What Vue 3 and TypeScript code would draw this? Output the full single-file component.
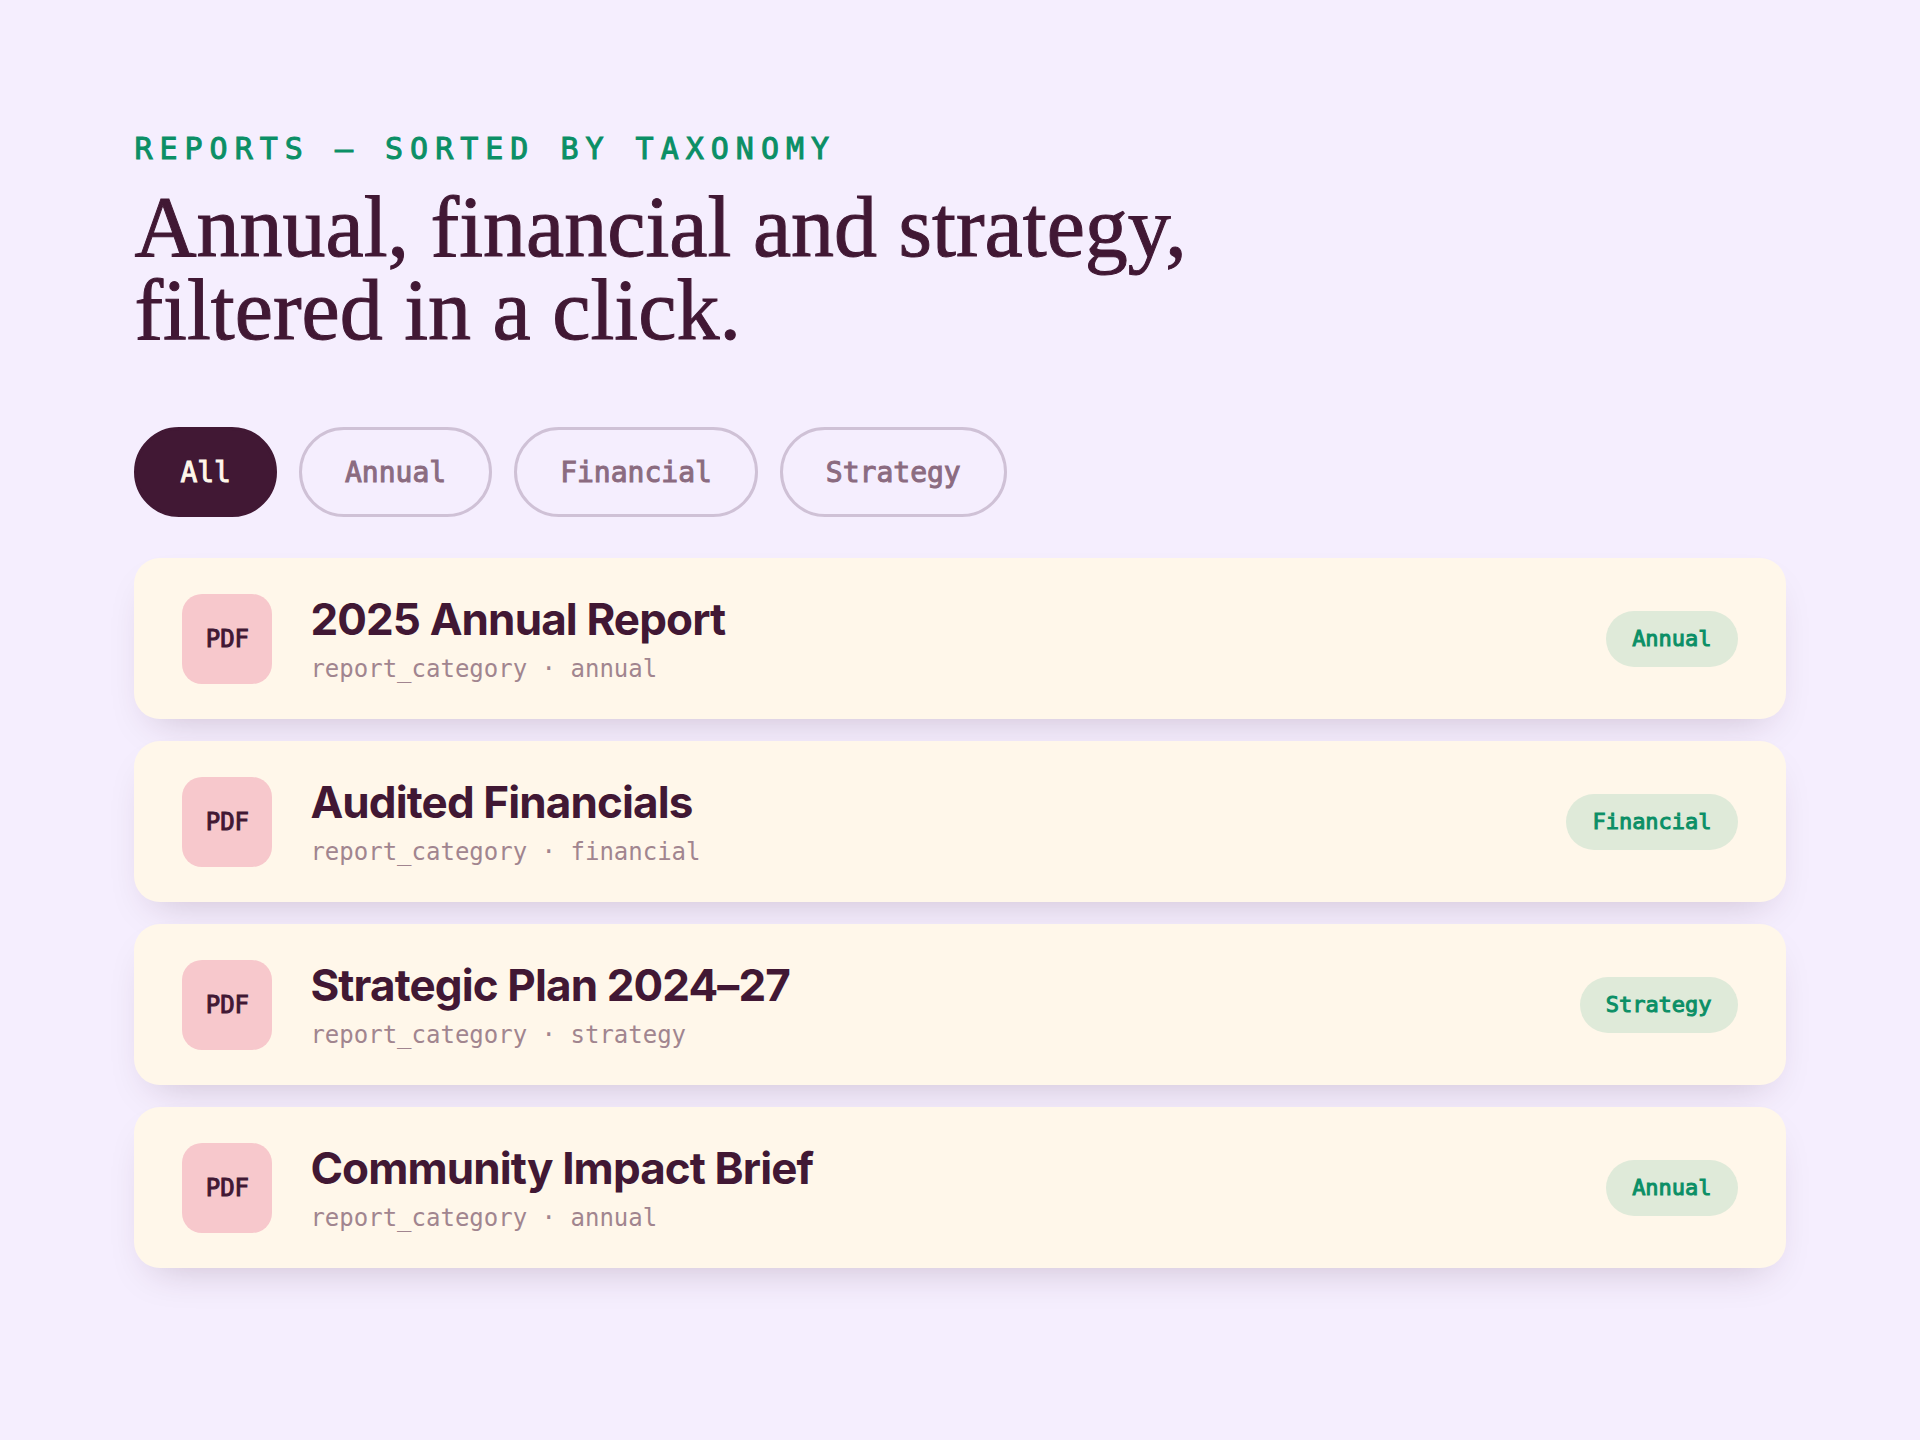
<script setup lang="ts">
import { computed, ref } from 'vue'

type Category = 'Annual' | 'Financial' | 'Strategy'
type Filter = 'All' | Category

interface Report {
  title: string
  category: Category
}

const filters: Filter[] = ['All', 'Annual', 'Financial', 'Strategy']

const reports: Report[] = [
  { title: '2025 Annual Report', category: 'Annual' },
  { title: 'Audited Financials', category: 'Financial' },
  { title: 'Strategic Plan 2024–27', category: 'Strategy' },
  { title: 'Community Impact Brief', category: 'Annual' },
]

const active = ref<Filter>('All')

const visible = computed(() =>
  active.value === 'All' ? reports : reports.filter((r) => r.category === active.value),
)
</script>

<template>
  <main class="page">
    <header>
      <p class="eyebrow">REPORTS — SORTED BY TAXONOMY</p>
      <h1 class="headline">Annual, financial and strategy,<br />filtered in a click.</h1>
    </header>

    <nav class="filters" aria-label="Report category">
      <button
        v-for="f in filters"
        :key="f"
        type="button"
        class="chip"
        :class="{ active: f === active }"
        :aria-pressed="f === active"
        @click="active = f"
      >{{ f }}</button>
    </nav>

    <ul class="reports">
      <li v-for="r in visible" :key="r.title" class="card">
        <span class="file">PDF</span>
        <div class="body">
          <h2 class="title">{{ r.title }}</h2>
          <p class="meta">report_category · {{ r.category.toLowerCase() }}</p>
        </div>
        <span class="tag">{{ r.category }}</span>
      </li>
    </ul>
  </main>
</template>

<style>
body {
  background: #f5eefe;
}
</style>

<style scoped>
.page {
  padding: 129px 7%;
  color: #411834;
  font-family: Inter, sans-serif;
}

.eyebrow,
.chip,
.file,
.meta,
.tag {
  font-family: 'DejaVu Sans Mono', monospace;
}

/* These families have no medium weight, so a thin stroke thickens them. */
.eyebrow,
.headline,
.chip,
.file,
.tag {
  -webkit-text-stroke: 1px currentColor;
}

.eyebrow {
  margin: 0;
  font-size: 30px;
  line-height: 40px;
  letter-spacing: 7px;
  color: #0b8f66;
}

.headline {
  margin: 17px 0 0;
  font-family: 'Liberation Serif', serif;
  font-size: 86px;
  font-weight: 400;
  line-height: 83px;
}

.filters {
  display: flex;
  flex-wrap: wrap;
  gap: 22px;
  margin-top: 75px;
}

.chip {
  padding: 2px 43px 0;
  border: 3px solid #cfc1d6;
  border-radius: 45px;
  background: transparent;
  color: #8b6b80;
  font-size: 28px;
  line-height: 82px;
  cursor: pointer;
}

.chip.active {
  border-color: #411834;
  background: #411834;
  color: #fff7ea;
}

.reports {
  display: flex;
  flex-direction: column;
  gap: 22px;
  margin: 41px 0 0;
  padding: 0;
  list-style: none;
}

.card {
  display: flex;
  align-items: center;
  gap: 38px;
  padding: 35px 48px 34px;
  border-radius: 26px;
  background: #fff7ea;
  box-shadow: 0 18px 40px -20px rgba(65, 24, 52, 0.25);
}

.file {
  flex: none;
  width: 90px;
  border-radius: 20px;
  background: #f7c8cc;
  font-size: 24px;
  line-height: 90px;
  text-align: center;
}

.body {
  flex: 1;
}

.title {
  margin: 0;
  font-size: 44px;
  font-weight: 700;
  line-height: 52px;
  letter-spacing: -0.02em;
}

.meta {
  margin: 8px 0 0;
  color: #a1858f;
  font-size: 24px;
  line-height: 32px;
}

.tag {
  padding: 0 26px;
  border-radius: 28px;
  background: #dfead9;
  color: #0b8f66;
  font-size: 22px;
  line-height: 56px;
}
</style>
